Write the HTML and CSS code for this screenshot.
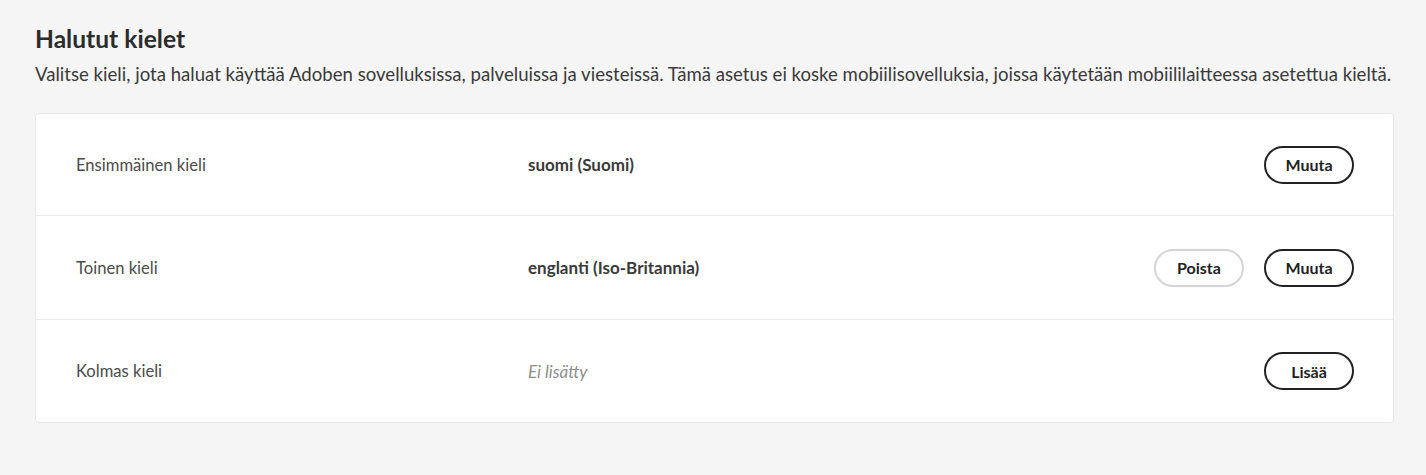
FILE: index.html
```html
<!DOCTYPE html>
<html lang="fi">
<head>
<meta charset="utf-8">
<title>Halutut kielet</title>
<link rel="stylesheet" href="styles.css">
</head>
<body>
<main class="page">
  <header class="intro">
    <h1 class="title">Halutut kielet</h1>
    <p class="desc">Valitse kieli, jota haluat käyttää Adoben sovelluksissa, palveluissa ja viesteissä. Tämä asetus ei koske mobiilisovelluksia, joissa käytetään mobiililaitteessa asetettua kieltä.</p>
  </header>
  <section class="card">
    <div class="row">
      <div class="label">Ensimmäinen kieli</div>
      <div class="value">suomi (Suomi)</div>
      <div class="actions"><button class="btn btn-dark">Muuta</button></div>
    </div>
    <div class="row">
      <div class="label">Toinen kieli</div>
      <div class="value">englanti (Iso-Britannia)</div>
      <div class="actions"><button class="btn btn-light">Poista</button><button class="btn btn-dark">Muuta</button></div>
    </div>
    <div class="row">
      <div class="label">Kolmas kieli</div>
      <div class="value empty">Ei lisätty</div>
      <div class="actions"><button class="btn btn-dark">Lisää</button></div>
    </div>
  </section>
</main>
</body>
</html>
```
FILE: styles.css
```css
html, body {
  margin: 0;
  padding: 0;
  background: #f5f5f5;
}
body {
  font-family: Lato, "Noto Sans", sans-serif;
  color: #2c2c2c;
}
.page {
  padding: 24px 32px 0 35px;
}
.intro {
  margin-bottom: 26px;
}
.title {
  margin: 0;
  font-size: 24.6px;
  font-weight: 700;
  line-height: 30px;
  color: #2c2c2c;
}
.desc {
  margin: 7px 0 0;
  font-size: 18.6px;
  line-height: 26px;
  color: #3a3a3a;
  white-space: nowrap;
}
.card {
  width: 1359px;
  box-sizing: border-box;
  background: #fff;
  border: 1px solid #e8e8e8;
  border-radius: 4px;
}
.row {
  display: flex;
  align-items: center;
  height: 103px;
  padding: 0 39px 0 40px;
  border-top: 1px solid #eaeaea;
}
.row:first-child {
  border-top: none;
  height: 101px;
}
.row:last-child {
  height: 102px;
}
.label {
  width: 452px;
  font-size: 16.6px;
  color: #4b4b4b;
}
.value {
  flex: 1;
  font-size: 17px;
  font-weight: 700;
  color: #3a3a3a;
}
.value.empty {
  font-weight: 400;
  font-style: italic;
  color: #8e8e8e;
}
.actions {
  display: flex;
  gap: 20px;
}
.btn {
  width: 90px;
  height: 38px;
  border-radius: 19px;
  background: #fff;
  font-family: inherit;
  font-size: 16px;
  font-weight: 700;
  color: #222;
  cursor: pointer;
  box-sizing: border-box;
}
.btn-dark {
  border: 2px solid #222;
}
.btn-light {
  border: 2px solid #d5d5d5;
}
```
